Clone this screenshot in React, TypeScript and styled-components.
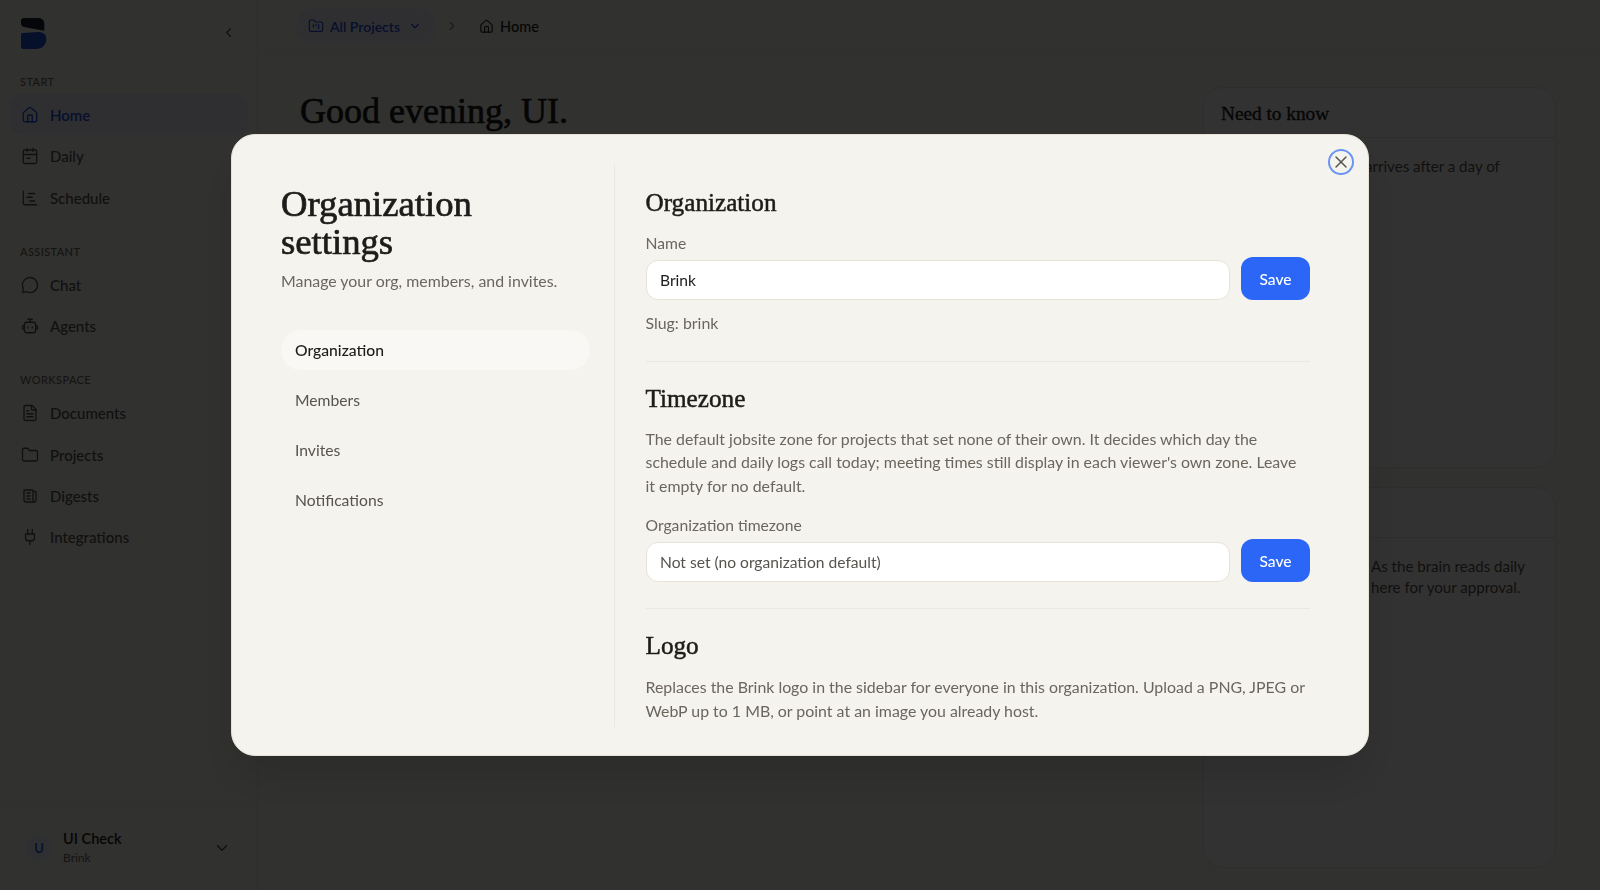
import React from "react";
import styled, { createGlobalStyle } from "styled-components";
import {
  House, ChartGantt, MessageCircle, FileText, Folder, Plug,
  ChevronLeft, ChevronRight, ChevronDown, FolderKanban, X,
} from "lucide-react";
import { TbNews } from "react-icons/tb";

const Global = createGlobalStyle`
  html, body { margin: 0; padding: 0; height: 100%; }
  body { background: #f5f3ee; font-family: "Lato", "Liberation Sans", sans-serif; color: #1c1c1a; overflow: hidden; }
  * { box-sizing: border-box; }
`;
const SERIF = `"Liberation Serif", serif`;

const Shell = styled.div`display: flex; width: 1600px; height: 890px; overflow: hidden;`;
const Sidebar = styled.aside`
  width: 258px; flex: none; display: flex; flex-direction: column;
  border-right: 1px solid #e6e2d8; padding: 0 9px;
`;
const LogoRow = styled.div`
  height: 75px; flex: none; display: flex; align-items: flex-start; justify-content: space-between;
  padding: 18px 12px 0 12px; color: #57534e;
  svg.chev { margin-top: 7px; }
`;
const SectionLabel = styled.div`
  font-size: 11px; letter-spacing: .4px; line-height: 14px; color: #6b665d; font-weight: 500;
  padding-left: 11px; margin-bottom: 5px;
`;
const Group = styled.div`display: flex; flex-direction: column; margin-bottom: 26.7px; gap: 0.4px;`;
const NavItem = styled.div<{ $active?: boolean }>`
  height: 41px; display: flex; align-items: center; gap: 11px; padding-left: 12px; border-radius: 12px;
  font-size: 15px; font-weight: ${p => (p.$active ? 600 : 500)};
  color: ${p => (p.$active ? "#1f4fd8" : "#57534e")};
  background: ${p => (p.$active ? "#e9ecf4" : "transparent")};
`;
const SideFooter = styled.div`
  margin: auto -9px 0; height: 84px; border-top: 1px solid #ece8df; display: flex; align-items: center;
  padding: 0 26px 2px 26px; gap: 11px;
`;
const Avatar = styled.div`
  width: 26px; height: 26px; border-radius: 50%; background: #e5e8f0; color: #1f4fd8;
  display: flex; align-items: center; justify-content: center; font-size: 13px; font-weight: 600;
`;
const UserText = styled.div`flex: 1; display: flex; flex-direction: column; gap: 2px;`;
const UserName = styled.div`font-size: 14.5px; font-weight: 600; line-height: 18px; color: #1c1c1a;`;
const UserOrg = styled.div`font-size: 12px; line-height: 16px; color: #6b665d;`;

const Main = styled.main`flex: 1; min-width: 0; display: flex; flex-direction: column;`;
const TopBar = styled.header`
  height: 53px; flex: none; border-bottom: 1px solid #ece8df; display: flex; align-items: flex-start;
  padding: 8px 0 0 38px; gap: 9px; color: #8a857b;
`;
const Pill = styled.div`
  height: 36px; display: flex; align-items: center; gap: 6px; font-size: 14px; font-weight: 600;
  padding: 0 14px 0 12px; border-radius: 18px; color: #1f4fd8; background: #e9ecf4;
  svg.down { margin-left: 2px; }
`;
const CrumbSep = styled.span`height: 36px; display: flex; align-items: center; color: #8a857b;`;
const Crumb = styled.div`
  height: 36px; display: flex; align-items: center; gap: 6px; font-size: 14.5px; font-weight: 500;
  padding: 0 7px 0 11px; color: #1c1c1a;
`;
const Content = styled.div`flex: 1; display: flex; padding: 34px 44px 22px 42px; justify-content: space-between;`;
const Greeting = styled.h1`
  font: 400 36px/48px ${SERIF}; -webkit-text-stroke: .7px currentColor; margin: 0; color: #1c1c1a;
`;
const Aside = styled.div`width: 353px; display: flex; flex-direction: column; gap: 19px;`;
const Card = styled.section<{ $h: number }>`
  height: ${p => p.$h}px; border: 1px solid #e6e2d8; border-radius: 20px; overflow: hidden; background: #fbfaf7;
`;
const CardHead = styled.div`
  height: 50px; padding: 3px 17px 0; display: flex; align-items: center; border-bottom: 1px solid #e6e2d8;
  font: 400 19.3px ${SERIF}; -webkit-text-stroke: .35px currentColor; color: #1c1c1a;
`;
const CardBody = styled.p<{ $inset: number }>`
  margin: 0; padding: 17.5px 17px 17.5px ${p => p.$inset}px; font-size: 15.1px; line-height: 21px; color: #57534e;
`;

const Overlay = styled.div`
  position: fixed; inset: 0; background: rgba(0, 0, 0, .8); backdrop-filter: blur(.5px);
  display: flex; align-items: center; justify-content: center;
`;
const Modal = styled.div`
  position: relative; width: 1138px; height: 622px; background: #f5f3ee; border-radius: 24px;
  border: 1px solid #e6e2d8; box-shadow: 0 25px 50px rgba(0,0,0,.12); display: flex; overflow: hidden;
  padding: 29px 58px 28px 49px;
`;
const CloseBtn = styled.button`
  position: absolute; top: 14px; right: 14px; width: 26px; height: 26px; border-radius: 50%;
  border: 2px solid #6c94f4; background: transparent; padding: 0; display: flex; align-items: center; justify-content: center;
  color: #57534e;
`;
const LeftCol = styled.div`width: 334px; flex: none; border-right: 1px solid #ece8df; padding-right: 24px;`;
const ModalTitle = styled.h2`
  font: 400 36.7px/38px ${SERIF}; -webkit-text-stroke: .7px currentColor; margin: 21px 0 0; width: 240px; color: #1c1c1a;
`;
const ModalSub = styled.p`font-size: 15.9px; line-height: 24px; margin: 8px 0 0; color: #6b665d;`;
const Tabs = styled.nav`display: flex; flex-direction: column; gap: 10px; margin-top: 37px;`;
const Tab = styled.div<{ $active?: boolean }>`
  height: 40px; display: flex; align-items: center; padding-left: 14px; border-radius: 20px; font-size: 15.7px;
  font-weight: ${p => (p.$active ? 500 : 400)};
  color: ${p => (p.$active ? "#1c1c1a" : "#57534e")};
  background: ${p => (p.$active ? "#f9f8f4" : "transparent")};
`;
const RightCol = styled.div`flex: 1; min-width: 0; padding: 24px 0 0 30.5px; overflow: hidden;`;
const Section = styled.section<{ $last?: boolean }>`
  padding-bottom: ${p => (p.$last ? 0 : 26)}px;
  margin-bottom: ${p => (p.$last ? 0 : 22)}px;
  border-bottom: ${p => (p.$last ? "none" : "1px solid #ece8df")};
`;
const SectionTitle = styled.h3`
  font: 400 25.2px/30px ${SERIF}; -webkit-text-stroke: .5px currentColor; margin: 0; color: #1c1c1a;
`;
const Label = styled.div<{ $mt: number }>`
  font-size: 15.7px; line-height: 22px; color: #6b665d; margin: ${p => p.$mt}px 0 3px;
`;
const Row = styled.div`display: flex; align-items: flex-end; gap: 11px;`;
const Field = styled.div<{ $muted?: boolean }>`
  flex: 1; height: 40px; background: #fff; border: 1px solid #e8e3d8; border-radius: 12px; padding: 0 13.5px;
  display: flex; align-items: center; font-size: 15.6px; color: ${p => (p.$muted ? "#57534e" : "#1c1c1a")};
`;
const SaveBtn = styled.button`
  width: 69px; height: 43px; background: #2b66f6; color: #fff; border: none; border-radius: 12px;
  font: 500 15.6px "Lato", sans-serif;
`;
const Muted = styled.p<{ $mt?: number }>`
  margin: ${p => p.$mt ?? 0}px 0 0; font-size: 15.9px; line-height: 23.5px; color: #6b665d;
`;

const LogoMark = () => (
  <svg width="26" height="32" viewBox="0 0 26 32" aria-hidden="true">
    <path d="M0 3C0 1.2 1.2 0 3 0H17.5C20.8 0 23.3 2.4 23.3 5.6V12.7L3 9C1 8.8 0 7.4 0 5.6z" fill="#1a2030" />
    <path d="M0 16.5C0 15.5.8 15 2 15C8 15 12 14 17 14C22 14 25.3 16.5 25.3 21C25.3 27 21 31 15 31H2.5C1 31 0 30 0 28.5z" fill="#1f4fd8" />
  </svg>
);
const CalendarDash = ({ size = 18 }: { size?: number }) => (
  <svg width={size} height={size} viewBox="0 0 24 24" fill="none" stroke="currentColor" strokeWidth="1.75" strokeLinecap="round" strokeLinejoin="round" aria-hidden="true">
    <rect x="3" y="4" width="18" height="18" rx="2" />
    <path d="M8 2v4M16 2v4M3 10h18M8 15h4" />
  </svg>
);
const BotHead = ({ size = 18 }: { size?: number }) => (
  <svg width={size} height={size} viewBox="0 0 24 24" fill="none" stroke="currentColor" strokeWidth="1.75" strokeLinecap="round" strokeLinejoin="round" aria-hidden="true">
    <path d="M9 3h6M12 3v4" />
    <rect x="4.5" y="7" width="15" height="14" rx="3" />
    <path d="M4.5 12H3a1 1 0 0 0-1 1v2a1 1 0 0 0 1 1h1.5M19.5 12H21a1 1 0 0 1 1 1v2a1 1 0 0 1-1 1h-1.5M9 13.5v1M15 13.5v1" />
  </svg>
);

const icon = { size: 18, strokeWidth: 1.75 };
const App = () => (
  <>
    <Global />
    <Shell>
      <Sidebar>
        <LogoRow><LogoMark /><ChevronLeft className="chev" size={15} /></LogoRow>
        <Group>
          <SectionLabel>START</SectionLabel>
          <NavItem $active><House {...icon} />Home</NavItem>
          <NavItem><CalendarDash />Daily</NavItem>
          <NavItem><ChartGantt {...icon} />Schedule</NavItem>
        </Group>
        <Group>
          <SectionLabel>ASSISTANT</SectionLabel>
          <NavItem><MessageCircle {...icon} />Chat</NavItem>
          <NavItem><BotHead />Agents</NavItem>
        </Group>
        <Group>
          <SectionLabel>WORKSPACE</SectionLabel>
          <NavItem><FileText {...icon} />Documents</NavItem>
          <NavItem><Folder {...icon} />Projects</NavItem>
          <NavItem><TbNews size={18} strokeWidth={1.75} />Digests</NavItem>
          <NavItem><Plug {...icon} />Integrations</NavItem>
        </Group>
        <SideFooter>
          <Avatar>U</Avatar>
          <UserText><UserName>UI Check</UserName><UserOrg>Brink</UserOrg></UserText>
          <ChevronDown size={18} color="#57534e" />
        </SideFooter>
      </Sidebar>
      <Main>
        <TopBar>
          <Pill><FolderKanban size={16} strokeWidth={1.75} />All Projects<ChevronDown className="down" size={14} /></Pill>
          <CrumbSep><ChevronRight size={14} /></CrumbSep>
          <Crumb><House size={15} strokeWidth={1.75} />Home</Crumb>
        </TopBar>
        <Content>
          <Greeting>Good evening, UI.</Greeting>
          <Aside>
            <Card $h={381}>
              <CardHead>Need to know</CardHead>
              <CardBody $inset={161}>arrives after a day of</CardBody>
            </Card>
            <Card $h={381}>
              <CardHead />
              <CardBody $inset={167}>As the brain reads daily<br />here for your approval.</CardBody>
            </Card>
          </Aside>
        </Content>
      </Main>
    </Shell>
    <Overlay>
      <Modal>
        <CloseBtn aria-label="Close"><X size={20} strokeWidth={1.75} /></CloseBtn>
        <LeftCol>
          <ModalTitle>Organization settings</ModalTitle>
          <ModalSub>Manage your org, members, and invites.</ModalSub>
          <Tabs>
            <Tab $active>Organization</Tab>
            <Tab>Members</Tab>
            <Tab>Invites</Tab>
            <Tab>Notifications</Tab>
          </Tabs>
        </LeftCol>
        <RightCol>
          <Section>
            <SectionTitle>Organization</SectionTitle>
            <Label $mt={14}>Name</Label>
            <Row><Field>Brink</Field><SaveBtn>Save</SaveBtn></Row>
            <Muted $mt={11}>Slug: brink</Muted>
          </Section>
          <Section>
            <SectionTitle>Timezone</SectionTitle>
            <Muted $mt={13}>The default jobsite zone for projects that set none of their own. It decides which day the schedule and daily logs call today; meeting times still display in each viewer's own zone. Leave it empty for no default.</Muted>
            <Label $mt={17}>Organization timezone</Label>
            <Row><Field $muted>Not set (no organization default)</Field><SaveBtn>Save</SaveBtn></Row>
          </Section>
          <Section $last>
            <SectionTitle>Logo</SectionTitle>
            <Muted $mt={14}>Replaces the Brink logo in the sidebar for everyone in this organization. Upload a PNG, JPEG or WebP up to 1 MB, or point at an image you already host.</Muted>
          </Section>
        </RightCol>
      </Modal>
    </Overlay>
  </>
);
export default App;
